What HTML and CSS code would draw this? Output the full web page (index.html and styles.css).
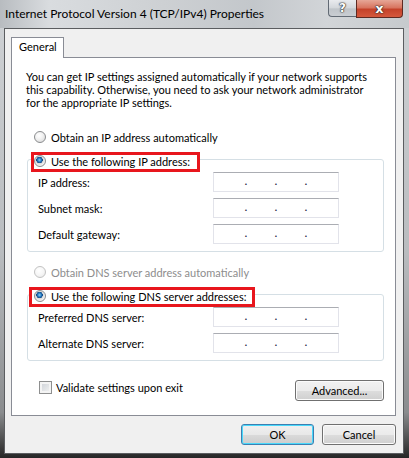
FILE: index.html
```html
<!DOCTYPE html>
<html lang="en">
<head>
  <meta charset="UTF-8" />
  <title>Internet Protocol Version 4 (TCP/IPv4) Properties</title>
  <link rel="stylesheet" href="styles.css">
</head>
<body>
  <div class="window">
    <div class="titlebar">
      <span class="title">Internet Protocol Version 4 (TCP/IPv4) Properties</span>
      <div class="caption">
        <span class="cap-help">?</span>
        <span class="cap-close">x</span>
      </div>
    </div>

    <div class="client">
      <div class="tab">General</div>
      <div class="panel">
        <p class="intro">You can get IP settings assigned automatically if your network supports<br>
          this capability. Otherwise, you need to ask your network administrator<br>
          for the appropriate IP settings.</p>

        <div class="option"><span class="radio"></span>Obtain an IP address automatically</div>

        <div class="group">
          <div class="group-head mark-ip"><span class="radio checked"></span>Use the following IP address:</div>
          <div class="field">
            <span class="label">IP address:</span>
            <div class="ip"><span>.</span><span>.</span><span>.</span></div>
          </div>
          <div class="field">
            <span class="label">Subnet mask:</span>
            <div class="ip"><span>.</span><span>.</span><span>.</span></div>
          </div>
          <div class="field">
            <span class="label">Default gateway:</span>
            <div class="ip"><span>.</span><span>.</span><span>.</span></div>
          </div>
        </div>

        <div class="option disabled"><span class="radio"></span>Obtain DNS server address automatically</div>

        <div class="group">
          <div class="group-head mark-dns"><span class="radio checked"></span>Use the following DNS server addresses:</div>
          <div class="field">
            <span class="label">Preferred DNS server:</span>
            <div class="ip"><span>.</span><span>.</span><span>.</span></div>
          </div>
          <div class="field">
            <span class="label">Alternate DNS server:</span>
            <div class="ip"><span>.</span><span>.</span><span>.</span></div>
          </div>
        </div>

        <div class="bottom-row">
          <div class="check"><span class="box"></span>Validate settings upon exit</div>
          <button class="btn advanced">Advanced...</button>
        </div>
      </div>

      <div class="footer">
        <button class="btn default">OK</button>
        <button class="btn">Cancel</button>
      </div>
    </div>
  </div>
</body>
</html>
```

FILE: styles.css
```css
* {
  box-sizing: border-box;
}

body {
  margin: 0;
  font-family: Lato, 'Noto Sans', sans-serif;
  font-size: 11px;
  color: #000;
  background: #2e2e2e;
}

.window {
  width: 409px;
  height: 458px;
  overflow: hidden;
  display: flex;
  flex-direction: column;
  background: linear-gradient(to bottom, #cfd2d5 0%, #b9bcbf 55%, #8a8c8e 90%, #3a3a3a 98%, #262626 100%);
}

/* title bar */
.titlebar {
  height: 28px;
  display: flex;
  align-items: flex-start;
  background: linear-gradient(to right, #b8bcc0 0%, #d9dcdf 12%, #cdd0d3 40%, #c3c7cb 62%, #d2d5d8 80%, #c6cacd 100%);
}
.title {
  padding-left: 5px;
  line-height: 28px;
  font-size: 12px;
  white-space: nowrap;
}
.caption {
  display: flex;
  margin-left: auto;
  margin-right: 6px;
}
.cap-help,
.cap-close {
  display: flex;
  justify-content: center;
  align-items: center;
  font-family: 'DejaVu Sans', sans-serif;
  font-weight: bold;
  color: #fff;
  text-shadow: 0 0 1px #222, 0 0 1px #222, 0 0 2px #333;
}
.cap-help {
  width: 28px;
  height: 17px;
  font-size: 12px;
  border: 1px solid #626a74;
  border-top: none;
  border-right: none;
  border-bottom-left-radius: 4px;
  background: linear-gradient(to bottom, #e9ebee 0%, #d3d7db 50%, #bfc4c9 55%, #c9cdd2 100%);
}
.cap-close {
  width: 47px;
  height: 18px;
  font-size: 13px;
  border: 1px solid #5e2a22;
  border-top: none;
  border-bottom-right-radius: 4px;
  background: linear-gradient(to bottom, #e6a797 0%, #d87560 45%, #c4422a 55%, #d5583c 100%);
}

/* dialog body */
.client {
  margin: 0 5px 5px 4px;
  padding: 8px 7px 8px 6px;
  background: #f0f0f0;
  border: 1px solid #5b5d60;
}

.tab {
  position: relative;
  width: 53px;
  height: 21px;
  margin-bottom: -1px;
  padding: 2px 0 0 7px;
  background: #fff;
  border: 1px solid #898c95;
  border-bottom: none;
  font-size: 11px;
}

.panel {
  background: #fff;
  border: 1px solid #898c95;
  padding-bottom: 14px;
}

.intro {
  margin: 12px 0 0 14px;
  line-height: 13px;
}

.option {
  display: flex;
  align-items: center;
  height: 14px;
  margin: 21px 0 0 22px;
}
.option.disabled {
  margin-top: 13px;
  color: #8d8d8d;
}

.radio {
  width: 12px;
  height: 12px;
  margin-right: 5px;
  flex-shrink: 0;
  border: 1px solid #8a8c8e;
  border-radius: 50%;
  background: radial-gradient(circle at 40% 35%, #ffffff 0%, #f2f2f2 40%, #d4d4d4 100%);
}
.option.disabled .radio {
  border-color: #c2c2c2;
  background: radial-gradient(circle at 40% 35%, #ffffff 0%, #f6f6f6 50%, #e6e6e6 100%);
}
.radio.checked {
  background: radial-gradient(circle at 45% 40%, #8fd3f8 0%, #2a7fc4 22%, #154a86 38%, #dadada 42%, #f4f4f4 70%, #d0d0d0 100%);
}

.group {
  margin: 15px 11px 0 15px;
  padding: 0 0 7px 10px;
  border: 1px solid #d5dfe5;
  border-radius: 3px;
}

.group-head {
  display: flex;
  align-items: flex-start;
  height: 20px;
  margin: -8px 0 0 -7px;
  padding: 0 0 0 0;
  background: #fff;
  border: 3px solid #e8161d;
  line-height: 13px;
}
.group-head .radio {
  margin: 0 5px 0 0;
}
.mark-ip {
  width: 169px;
}
.mark-dns {
  width: 226px;
  margin-left: -9px;
  padding-left: 2px;
}

.field {
  display: flex;
  align-items: center;
  height: 20px;
  margin-top: 6px;
}
.group-head + .field {
  margin-top: 0;
}
.label {
  width: 175px;
}

.ip {
  display: flex;
  width: 126px;
  height: 20px;
  padding-left: 17px;
  border: 1px solid #e2e3ea;
  border-top-color: #abadb3;
  background: #fff;
  line-height: 15px;
  font-size: 12px;
  color: #1a1a40;
}
.ip span {
  width: 30px;
  text-align: center;
}

.bottom-row {
  display: flex;
  align-items: flex-start;
  margin: 19px 11px 0 27px;
}
.check {
  display: flex;
  align-items: center;
  margin-top: 1px;
}
.box {
  width: 13px;
  height: 13px;
  margin-right: 4px;
  border: 1px solid #8e8f8f;
  background: linear-gradient(135deg, #cbcfd5 0%, #e4e6e8 60%, #f5f5f5 100%);
  box-shadow: inset 0 0 0 2px #f4f4f4;
}

.btn {
  height: 21px;
  padding: 0;
  font-family: Lato, 'Noto Sans', sans-serif;
  font-size: 11px;
  color: #000;
  border: 1px solid #707070;
  border-radius: 3px;
  background: linear-gradient(to bottom, #f2f2f2 0%, #ebebeb 50%, #dddddd 51%, #cfcfcf 100%);
  box-shadow: inset 0 0 0 1px #fbfbfb;
}
.advanced {
  width: 89px;
  margin-left: auto;
}

.footer {
  display: flex;
  justify-content: flex-end;
  gap: 8px;
  margin-top: 8px;
}
.footer .btn {
  width: 74px;
}
.btn.default {
  width: 73px;
  border-color: #3c7fb1;
  box-shadow: inset 0 0 0 1px #48d8fb;
  background: linear-gradient(to bottom, #eaf6fd 0%, #d9f0fc 50%, #bee6fd 51%, #a7d9f5 100%);
  background: linear-gradient(to bottom, #f0f0f0 0%, #e8e8e8 50%, #dadada 51%, #cccccc 100%);
}
```
